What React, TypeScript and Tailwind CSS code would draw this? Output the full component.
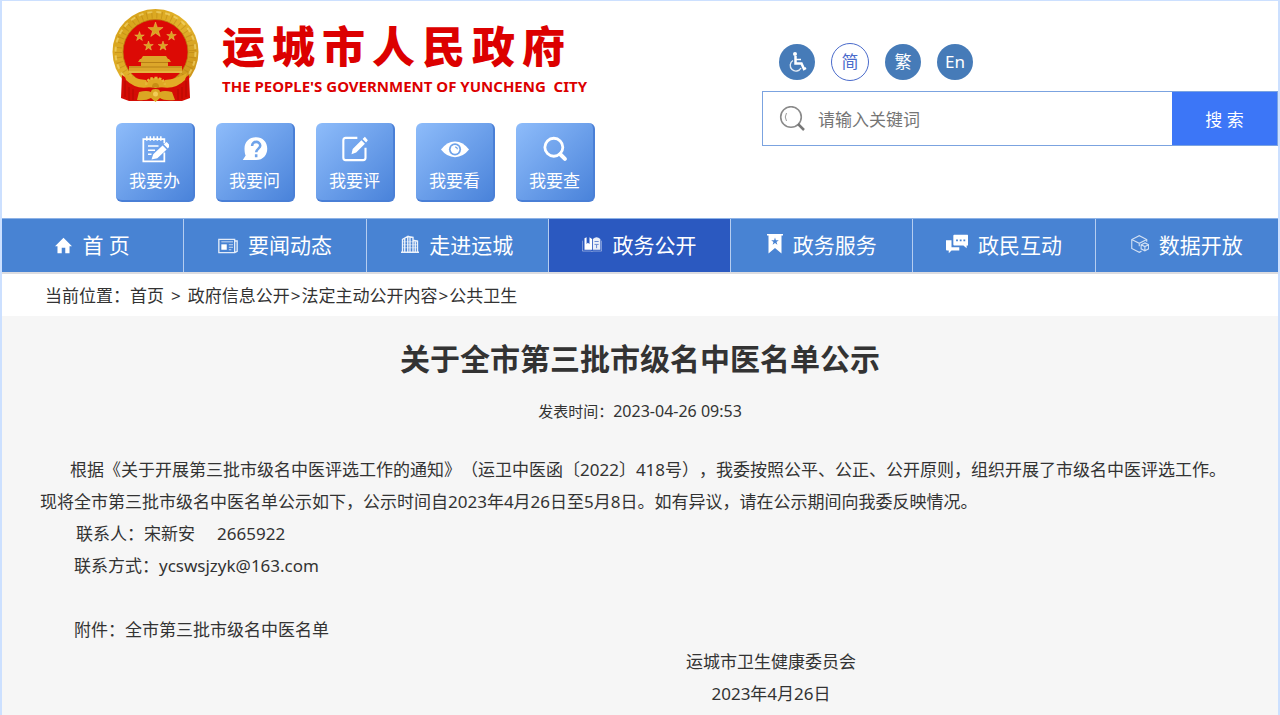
import type { ReactNode } from 'react';

const star = (cx: number, cy: number, r: number) =>
  Array.from({ length: 10 }, (_, i) => {
    const a = (Math.PI / 5) * i - Math.PI / 2;
    const d = i % 2 ? r * 0.4 : r;
    return `${(cx + d * Math.cos(a)).toFixed(1)},${(cy + d * Math.sin(a)).toFixed(1)}`;
  }).join(' ');

const Emblem = () => (
  <svg viewBox="0 0 87 93" className="w-[87px] h-[93px]" aria-hidden="true">
    <defs>
      <linearGradient id="gold" x1="0" y1="0" x2="1" y2="1">
        <stop offset="0" stopColor="#d29c14" />
        <stop offset="0.5" stopColor="#e3b32c" />
        <stop offset="1" stopColor="#c48a12" />
      </linearGradient>
    </defs>
    <circle cx="43.500" cy="43" r="43" fill="url(#gold)" />
    <circle
      cx="43.500"
      cy="43"
      r="37"
      fill="none"
      stroke="#a66f0c"
      strokeWidth="7"
      strokeDasharray="1 4"
      opacity="0.35"
    />
    <circle
      cx="43.500"
      cy="43"
      r="40"
      fill="none"
      stroke="#f7dc78"
      strokeWidth="2"
      strokeDasharray="5 4"
      opacity="0.6"
    />
    <circle cx="43.500" cy="43" r="32.500" fill="#dc0a05" stroke="#b97d10" strokeWidth="0.800" />
    {/* drapes */}
    <path d="M10 66Q24 78 43.500 79Q63 78 77 66L78 89L70 92H17L9 89Z" fill="#d40c05" />
    <g fill="#d9a420" stroke="#f6d468" strokeWidth="0.400">
      <polygon points={star(43.5, 21, 8)} />
      <polygon points={star(27.5, 27.5, 5)} />
      <polygon points={star(59.5, 27, 5)} />
      <polygon points={star(36.500, 37, 5)} />
      <polygon points={star(51, 37, 5)} />
    </g>
    <g fill="#dca62a">
      <path d="M31 47H54L56 50H29Z" />
      <path d="M28 50H57L59 53H26Z" />
      <path d="M29 53H56V57H29Z" />
      <path d="M17 57H70V64H17Z" />
    </g>
    <path d="M29 53.500H56M17 58H70" stroke="#a8700e" strokeWidth="0.700" />
    <path d="M17 63H70" stroke="#f1cd62" strokeWidth="0.800" />
    {/* ribbon and cogwheel */}
    <path d="M12 64Q22 70 34 71L38 78Q24 81 14 71Z" fill="#e2ac26" />
    <path d="M75 64Q65 70 53 71L49 78Q63 81 73 71Z" fill="#e2ac26" />
    <path d="M34 78Q34 69 43.500 69T53 78Z" fill="#dfa823" />
    <path
      d="M34 76Q35 69 43.500 69T53 76"
      fill="none"
      stroke="#e6b636"
      strokeWidth="2.500"
      strokeDasharray="2.500 1.500"
    />
    <path d="M40 78Q40 74 43.500 74T47 78Z" fill="#c88d14" />
    <path d="M15 75Q28 82 43.500 80Q59 82 72 75L71 84Q60 87 43.500 85Q27 87 16 84Z" fill="#d40c05" />
    <path d="M27 83Q35 81 39 83Q39 80 43.500 80T48 83Q52 81 60 83L63 91Q52 92 48 89L43.500 93L39 89Q34 92 25 91Z" fill="#dba623" />
    <circle cx="43.500" cy="85" r="2.500" fill="#f2cd57" />
    <path
      d="M13 72V88M17 78V91M21 80V91M66 80V91M70 78V90M74 72V88"
      stroke="#920600"
      strokeWidth="0.800"
      opacity="0.6"
    />
  </svg>
);

const Svg = ({ size, children }: { size: string; children: ReactNode }) => (
  <svg viewBox="0 0 24 24" className={size} fill="currentColor" aria-hidden="true">
    {children}
  </svg>
);

const quickLinks = [
  {
    label: '我要办',
    icon: (
      <Svg size="size-7">
        <path
          d="M20 15V22.500H2V3.500H20V7"
          fill="none"
          stroke="currentColor"
          strokeWidth="1.500"
        />
        <path
          d="M5 1V5M8 1V5M11 1V5M14 1V5M17 1V5M6 9.500H15M6 13H12M6 16.500H9"
          stroke="currentColor"
          strokeWidth="1.300"
        />
        <path d="M19.500 8L22 6L25 9.200L23 11.500ZM18.500 9L22 12.500L14 20L9 21L10.500 16.500Z" />
      </Svg>
    ),
  },
  {
    label: '我要问',
    icon: (
      <Svg size="size-7">
        <path d="M13 2C7 2 3 6 3 11.500C3 14.500 3.500 16.500 4 17.500L1.500 21.500H13C19 21.500 22.500 17 22.500 11.800C22.500 6 18.500 2 13 2Z" />
        <path
          d="M9.500 9.500C9.500 4.500 16.500 5 16.500 9.300C16.500 11.500 13 12 13 14.800M13 16.500V19"
          fill="none"
          stroke="#6fa3ea"
          strokeWidth="2.200"
        />
      </Svg>
    ),
  },
  {
    label: '我要评',
    icon: (
      <Svg size="size-7">
        <path
          d="M14 2.500H4Q2 2.500 2 4.500V19.500Q2 21.500 4 21.500H19Q21 21.500 21 19.500V11"
          fill="none"
          stroke="currentColor"
          strokeWidth="1.800"
        />
        <path d="M18.500 3.500L20.500 1.500L23 4.500L21.500 6.500ZM17.500 4.500L20.500 7.500L13 15L9 16.500L10 12Z" />
      </Svg>
    ),
  },
  {
    label: '我要看',
    icon: (
      <Svg size="size-7">
        <path d="M0 12.500Q5 5.500 12 5.500T24 12.500Q19 19 12 19T0 12.500Z" />
        <circle cx="12" cy="12.300" r="5.200" fill="#6fa3ea" />
        <circle cx="12" cy="12.300" r="3.700" />
        <path d="M12 10.300A2 2 0 0 1 14 12.300" fill="none" stroke="#6fa3ea" />
      </Svg>
    ),
  },
  {
    label: '我要查',
    icon: (
      <Svg size="size-7">
        <circle cx="11" cy="10.500" r="7.700" fill="none" stroke="currentColor" strokeWidth="2.400" />
        <path d="M16.500 16.500L20.500 20.500" stroke="currentColor" strokeWidth="3.400" strokeLinecap="round" />
      </Svg>
    ),
  },
];

const navItems = [
  {
    label: '首 页',
    icon: (
      <Svg size="w-[17px] h-[17px]">
        <path d="M12 1L24 13H20.500V23H14.500V15H9.500V23H3.500V13H0Z" />
      </Svg>
    ),
  },
  {
    label: '要闻动态',
    icon: (
      <Svg size="w-5 h-5">
        <path
          d="M1 4H20V20H1ZM20 6H23V18.500L20 20"
          fill="none"
          stroke="currentColor"
          strokeWidth="1.600"
          opacity="0.85"
        />
        <path d="M4 10H10.500V16.500H4Z" />
        <path
          d="M4 7H18M13 10.500H18M13 13.500H18M13 16.500H16"
          stroke="currentColor"
          strokeWidth="1.200"
          opacity="0.7"
        />
      </Svg>
    ),
  },
  {
    label: '走进运城',
    icon: (
      <Svg size="w-[18px] h-5 mb-1">
        <path
          d="M0 23H24M2 22V6L9 2V22M9 2L16 3V22M16 7L22 8V22M5 5V22M12 3V22M19 8V22"
          fill="none"
          stroke="currentColor"
          strokeWidth="1.800"
          opacity="0.9"
        />
        <path
          d="M2 9H22M2 13H22M2 17H22"
          stroke="currentColor"
          strokeWidth="0.800"
          opacity="0.8"
        />
      </Svg>
    ),
  },
  {
    label: '政务公开',
    active: true,
    icon: (
      <Svg size="w-5 h-5 mb-1">
        <path d="M3 5L5.500 4V12L7 10.500L9 12V4L12 6V19H3Z" />
        <path d="M0.500 8V20.500H11L12 21.500L13 20.500H23.500V8" fill="none" stroke="currentColor" opacity="0.5" />
        <path d="M13 6Q17.500 2 22 6V19H13Z" opacity="0.9" />
        <path d="M15 9H20M15 12.500H20M17.500 13V17" stroke="#2b59c0" opacity="0.8" />
      </Svg>
    ),
  },
  {
    label: '政务服务',
    icon: (
      <svg viewBox="0 0 16 20" className="w-4 h-5 mb-1" fill="currentColor" aria-hidden="true">
        <path d="M0 0H16V1.500H14.500V19.500L8 14L1.500 19.500V1.500H0Z" />
        <polygon points={star(8, 7.5, 4)} fill="#4883d3" />
      </svg>
    ),
  },
  {
    label: '政民互动',
    icon: (
      <Svg size="w-[22px] h-[22px] mb-1">
        <path d="M9 2H23.500Q24 2 24 3V13.500H22.500V16.500L19 13.500H9Q8 13.500 8 12.500V3Q8 2 9 2Z" />
        <path d="M0 8H6V15.500H14.500V19H6L3 22V19H1Q0 19 0 18Z" />
        <path d="M11 8H13M15 8H17M19 8H21" stroke="#4883d3" strokeWidth="2" />
      </Svg>
    ),
  },
  {
    label: '数据开放',
    icon: (
      <Svg size="w-[18px] h-[18px] mb-1">
        <g fill="none" stroke="currentColor" strokeWidth="1.500" opacity="0.75">
          <path d="M14 21.500L11 23L1 18V6L11 1L21 6V9M1 6L11 11L21 6M11 11V15" />
          <path d="M18.500 10.500L23.500 13V18.500L18.500 21L13.500 18.500V13ZM13.500 13L18.500 15.500L23.500 13M18.500 15.500V21" />
        </g>
      </Svg>
    ),
  },
];

const Header = () => (
  <header className="flex bg-white pb-4">
    <div className="w-[760px] shrink-0 pl-[110px] pt-2">
      <div className="flex gap-[23px]">
        <Emblem />
        <div className="pt-[11px] text-[#dc0000]">
          <h1
            className="flex gap-[7px] text-[43px] leading-[54px] font-black"
            aria-label="运城市人民政府"
          >
            {[...'运城市人民政府'].map((char) => (
              <span key={char}>{char}</span>
            ))}
          </h1>
          <p className="text-[15px] leading-6 font-bold whitespace-pre">
            {"THE PEOPLE'S GOVERNMENT OF YUNCHENG  CITY"}
          </p>
        </div>
      </div>
      <div className="flex gap-[21px] pl-1 mt-[21px]">
        {quickLinks.map(({ label, icon }) => (
          <a
            key={label}
            href="#"
            className="flex flex-col items-center w-[79px] h-[79px] pt-3 rounded-md bg-linear-to-br from-[#8ebcfa] to-[#4a83da] border-r-2 border-b-2 border-[#4a7fd6] text-white"
          >
            {icon}
            <span className="text-[17px] leading-6 mt-[6px]">{label}</span>
          </a>
        ))}
      </div>
    </div>
    <div className="flex-1 pt-[42px]">
      <div className="flex items-center gap-4 pl-[17px]">
        <button
          className="flex items-center justify-center size-9 rounded-full bg-[#467bb8] text-white"
          aria-label="无障碍"
        >
          <Svg size="size-6">
            <circle cx="10" cy="4" r="2" />
            <path
              d="M10.500 6V13.500H16.500L19 19L21 18"
              fill="none"
              stroke="currentColor"
              strokeWidth="2.500"
            />
            <path d="M11 9.500H16" stroke="currentColor" strokeWidth="1.500" />
            <path
              d="M8 10.500A5.700 5.700 0 1 0 16 18"
              fill="none"
              stroke="currentColor"
              strokeWidth="1.400"
              opacity="0.85"
            />
          </Svg>
        </button>
        <button className="size-[38px] rounded-full border border-[#4a6bcb] text-[#4a6bcb] text-[17px]">
          简
        </button>
        <button className="size-9 rounded-full bg-[#467bb8] text-white text-[17px]">繁</button>
        <button className="size-9 rounded-full bg-[#467bb8] text-white text-[17px]">En</button>
      </div>
      <form className="flex items-center h-[55px] mt-[10px] border border-[#7ba3e0]">
        <svg viewBox="0 0 26 26" className="size-[26px] ml-4" fill="none" aria-hidden="true">
          <circle cx="12" cy="11" r="10.300" stroke="#8a8a8a" strokeWidth="1.600" />
          <path d="M7.500 7Q5 11 7.500 15" stroke="#999" />
          <path d="M19 18L25 24" stroke="#777" strokeWidth="2.500" />
        </svg>
        <input
          type="text"
          aria-label="请输入关键词"
          placeholder="请输入关键词"
          className="flex-1 min-w-0 h-full px-[13px] pt-[2px] text-[17px] placeholder:text-[#757575] outline-none"
        />
        <button
          type="button"
          className="w-[105px] h-full pt-[2px] bg-[#3c76f7] text-white text-[17px]"
        >
          搜 索
        </button>
      </form>
    </div>
  </header>
);

const Nav = () => (
  <nav className="grid grid-cols-7 border-t border-t-[#8db2e6] border-b-2 border-b-[#dcdce0] bg-[#4883d3]">
    {navItems.map(({ label, icon, active }) => (
      <a
        key={label}
        href="#"
        className={`flex items-center justify-center gap-[10px] h-[53px] text-white text-[21px] border-r border-[#b5cdf0] last:border-r-0 ${
          active ? 'bg-[#2b59c0]' : ''
        }`}
      >
        {icon}
        <span>{label}</span>
      </a>
    ))}
  </nav>
);

const Article = () => (
  <main className="flex-1 px-[38px] pt-[22px] pb-1 bg-[#f6f6f6] text-[#333]">
    <h2 className="text-center text-[30px] leading-[42px] font-bold">
      关于全市第三批市级名中医名单公示
    </h2>
    <p className="mt-5 text-center text-[15px] leading-[22px]">
      发表时间：<span className="text-base leading-[22px]">2023-04-26 09:53</span>
    </p>
    <div className="mt-8 text-[17px] leading-8">
      <p className="indent-[30px]">
        根据《关于开展第三批市级名中医评选工作的通知》（运卫中医函〔2022〕418号），我委按照公平、公正、公开原则，组织开展了市级名中医评选工作。现将全市第三批市级名中医名单公示如下，公示时间自2023年4月26日至5月8日。如有异议，请在公示期间向我委反映情况。
      </p>
      <p className="pl-9 whitespace-pre">联系人：宋新安{'    '} 2665922</p>
      <p className="indent-[2em]">联系方式：ycswsjzyk@163.com</p>
      <p className="indent-[2em] mt-8">附件：全市第三批市级名中医名单</p>
      <div className="pl-[262px] text-center">
        <p>运城市卫生健康委员会</p>
        <p>2023年4月26日</p>
      </div>
    </div>
  </main>
);

export default function App() {
  return (
    <div className="flex flex-col min-h-screen border-x-2 border-t border-[#cce0ff] bg-white font-['Noto_Sans','Noto_Sans_CJK_SC',sans-serif] [text-spacing-trim:space-all]">
      <Header />
      <Nav />
      <div className="px-[43px] pt-[7px] pb-[5px] text-[17px] leading-[30px] text-[#333]">
        当前位置：<a href="#">首页</a>
        <span className="mx-[7px]">&gt;</span>
        <a href="#">政府信息公开</a>
        <span className="mx-px">&gt;</span>
        <a href="#">法定主动公开内容</a>
        <span className="mx-px">&gt;</span>
        <a href="#">公共卫生</a>
      </div>
      <Article />
    </div>
  );
}
